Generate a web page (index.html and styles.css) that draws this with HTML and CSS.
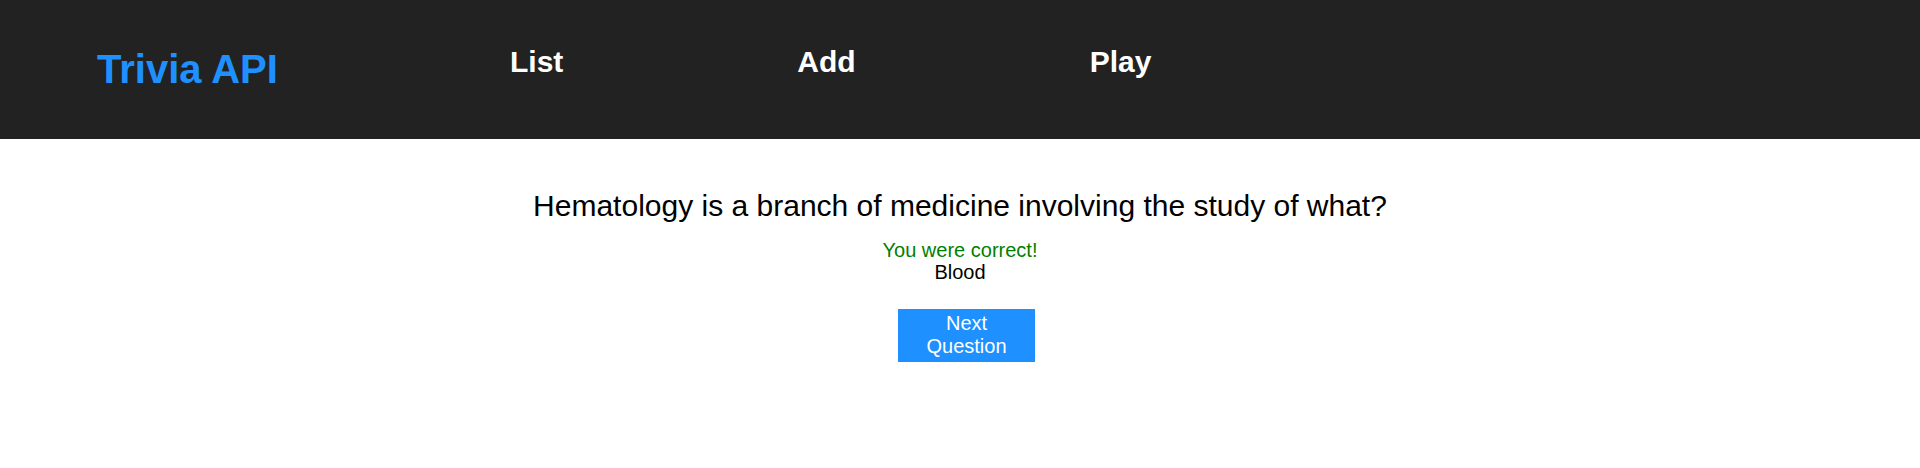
FILE: index.html
```html
<!DOCTYPE html>
<html lang="en">
<head>
<meta charset="utf-8">
<title>Trivia API</title>
<link rel="stylesheet" href="styles.css">
</head>
<body>
<header class="topbar">
  <h1 class="brand">Trivia API</h1>
  <nav class="nav">
    <a class="nav-item" href="#">List</a>
    <a class="nav-item" href="#">Add</a>
    <a class="nav-item" href="#">Play</a>
  </nav>
</header>
<main class="quiz">
  <div class="question">Hematology is a branch of medicine involving the study of what?</div>
  <div class="result">
    <div class="correct">You were correct!</div>
    <div class="answer">Blood</div>
  </div>
  <button class="next-btn" type="button">Next Question</button>
</main>
</body>
</html>
```

FILE: styles.css
```css
html, body {
  margin: 0;
  padding: 0;
  background: #ffffff;
  font-family: "Liberation Sans", Arial, sans-serif;
}

.topbar {
  height: 139px;
  background: #222222;
  display: flex;
  align-items: flex-start;
  padding-left: 97px;
  box-sizing: border-box;
}

.brand {
  margin: 46px 0 0 0;
  width: 413px;
  font-size: 40px;
  line-height: 46px;
  font-weight: bold;
  color: #1e90ff;
}

.nav {
  display: flex;
  gap: 234px;
  margin-top: 44px;
}

.nav-item {
  font-size: 30px;
  line-height: 35px;
  font-weight: bold;
  color: #ffffff;
  text-decoration: none;
}

.quiz {
  display: flex;
  flex-direction: column;
  align-items: center;
  padding-top: 49px;
}

.question {
  font-size: 30px;
  line-height: 35px;
  color: #000000;
  margin-bottom: 16px;
}

.result {
  text-align: center;
  font-size: 20px;
  line-height: 22px;
}

.correct {
  color: #008000;
}

.answer {
  color: #000000;
}

.next-btn {
  margin-top: 26px;
  margin-left: 13px;
  width: 137px;
  box-sizing: border-box;
  padding: 3px 20px 4px 20px;
  border: none;
  background: #1e90ff;
  color: #ffffff;
  font-family: "Liberation Sans", Arial, sans-serif;
  font-size: 20px;
  line-height: 23px;
  text-align: center;
}
```
